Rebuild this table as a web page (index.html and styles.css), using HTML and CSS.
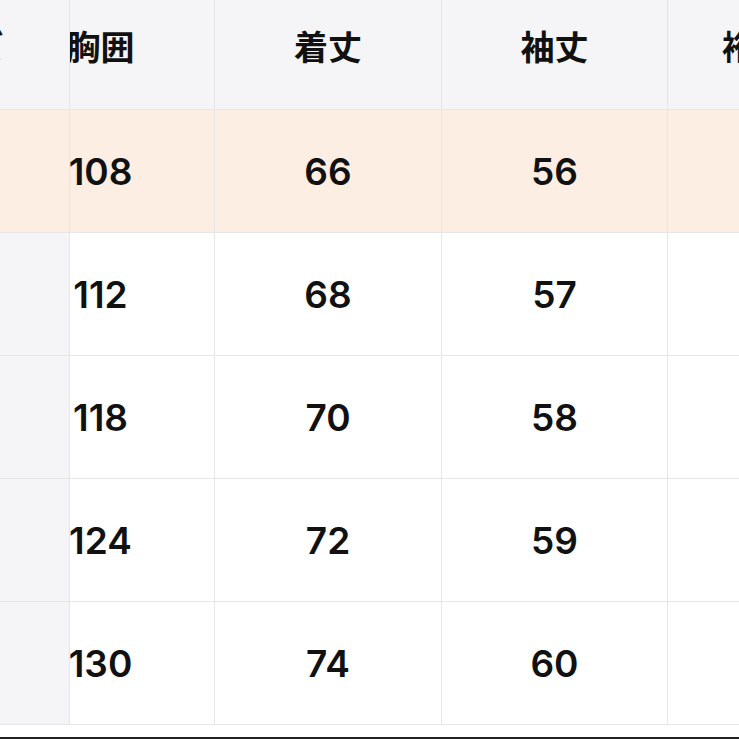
FILE: index.html
```html
<!DOCTYPE html>
<html lang="ja">
<head>
<meta charset="utf-8">
<link rel="stylesheet" href="styles.css">
</head>
<body>
<div class="page">
  <div class="table">
    <div class="cell head side"><span class="in in-side">サイズ</span></div>
    <div class="cell head c2"><span class="in in-c2">胸囲</span></div>
    <div class="cell head"><span class="in">着丈</span></div>
    <div class="cell head"><span class="in">袖丈</span></div>
    <div class="cell head c5"><span class="in in-c5">裄丈</span></div>

    <div class="cell hl side"></div>
    <div class="cell hl c2 num"><span class="in in-c2">108</span></div>
    <div class="cell hl num"><span class="in">66</span></div>
    <div class="cell hl num"><span class="in">56</span></div>
    <div class="cell hl c5"></div>

    <div class="cell side"></div>
    <div class="cell c2 num"><span class="in in-c2">112</span></div>
    <div class="cell num"><span class="in">68</span></div>
    <div class="cell num"><span class="in">57</span></div>
    <div class="cell c5"></div>

    <div class="cell side"></div>
    <div class="cell c2 num"><span class="in in-c2">118</span></div>
    <div class="cell num"><span class="in">70</span></div>
    <div class="cell num"><span class="in">58</span></div>
    <div class="cell c5"></div>

    <div class="cell side"></div>
    <div class="cell c2 num"><span class="in in-c2">124</span></div>
    <div class="cell num"><span class="in">72</span></div>
    <div class="cell num"><span class="in">59</span></div>
    <div class="cell c5"></div>

    <div class="cell side"></div>
    <div class="cell c2 num"><span class="in in-c2">130</span></div>
    <div class="cell num"><span class="in">74</span></div>
    <div class="cell num"><span class="in">60</span></div>
    <div class="cell c5"></div>
  </div>
  <div class="gap"></div>
  <div class="bar"></div>
</div>
</body>
</html>
```
FILE: styles.css
```css
html, body {
  margin: 0;
  padding: 0;
  background: #ffffff;
}
.page {
  width: 739px;
  height: 739px;
  overflow: hidden;
  display: flex;
  flex-direction: column;
}
.table {
  display: grid;
  grid-template-columns: 70px 145px 227px 226px 1fr;
  grid-template-rows: 110px repeat(5, 123px);
}
.cell {
  box-sizing: border-box;
  border-right: 1px solid #e6e6e8;
  border-bottom: 1px solid #e6e6e8;
  overflow: hidden;
  display: flex;
  align-items: center;
  justify-content: center;
  background: #ffffff;
  color: #111111;
}
.head {
  background: #f5f5f7;
  font-family: "Noto Sans CJK JP", sans-serif;
  font-weight: 700;
  font-size: 34px;
  padding-bottom: 18px;
}
.side {
  background: #f5f5f7;
  justify-content: flex-end;
}
.hl {
  background: #fdeee3;
}
.c2 {
  justify-content: flex-end;
}
.c5 {
  justify-content: flex-start;
  border-right: none;
}
.in {
  flex-shrink: 0;
  text-align: center;
  white-space: nowrap;
}
.in-side {
  width: 232px;
}
.in-c2 {
  width: 227px;
}
.in-c5 {
  width: 176px;
}
.num {
  font-family: Inter, "Liberation Sans", sans-serif;
  font-weight: 600;
  font-size: 37px;
}
.gap {
  height: 12px;
}
.bar {
  height: 2px;
  background: #222222;
}
```
